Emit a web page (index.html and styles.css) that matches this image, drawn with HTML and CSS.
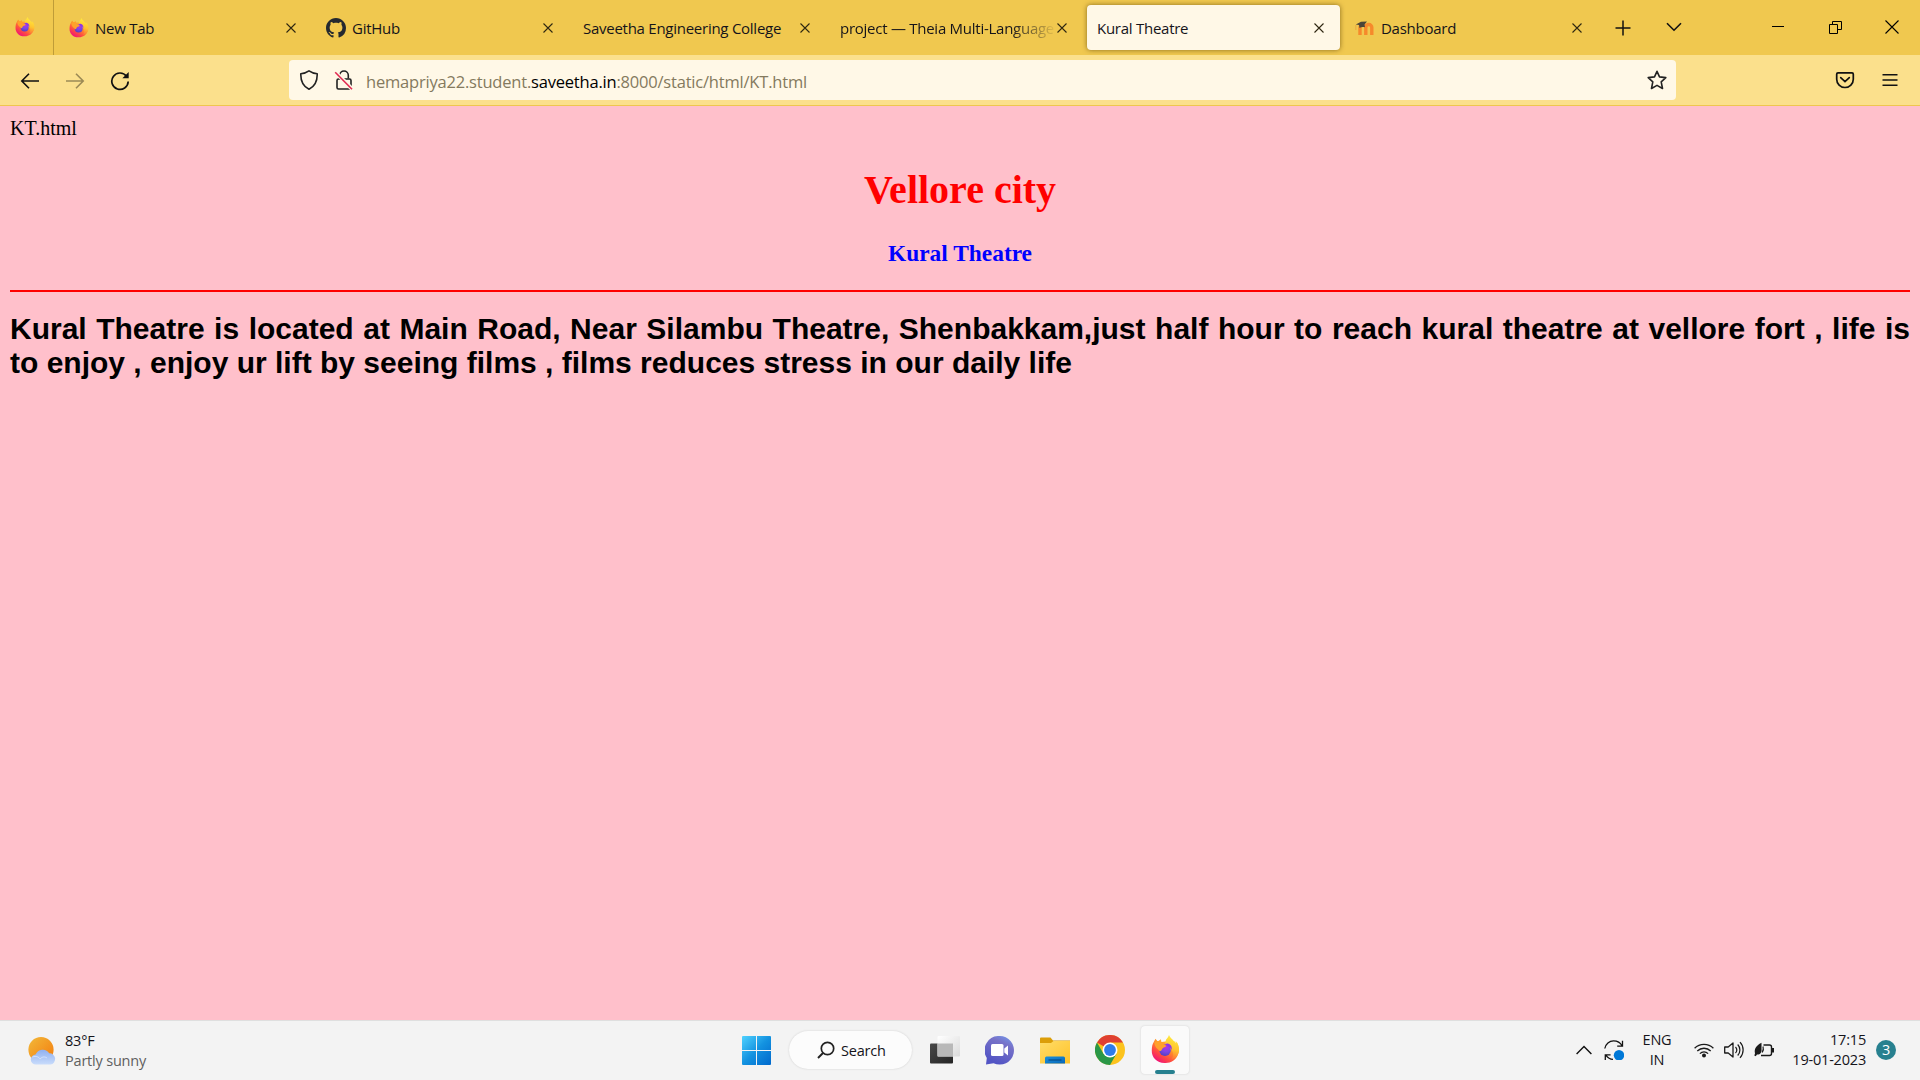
FILE: index.html
```html
<!DOCTYPE html>
<html lang="en">
<head>
<meta charset="utf-8">
<title>Kural Theatre</title>
<link rel="stylesheet" href="styles.css">
</head>
<body>
<svg class="defs" width="0" height="0" aria-hidden="true">
  <defs>
    <linearGradient id="fx-body" x1=".85" y1=".1" x2=".2" y2=".95"><stop offset="0" stop-color="#ffd53a"/><stop offset=".4" stop-color="#ff9028"/><stop offset=".7" stop-color="#ff4a42"/><stop offset="1" stop-color="#f0107a"/></linearGradient>
    <linearGradient id="fx-flame" x1=".6" y1="0" x2=".4" y2="1"><stop offset="0" stop-color="#fff03f"/><stop offset=".55" stop-color="#ffc42f"/><stop offset="1" stop-color="#ff6a36"/></linearGradient>
    <radialGradient id="fx-globe" cx=".6" cy=".2" r=".9"><stop offset="0" stop-color="#b833e1"/><stop offset=".5" stop-color="#7a45e5"/><stop offset="1" stop-color="#4a3fb5"/></radialGradient>
    <symbol id="firefox" viewBox="0 0 30 30">
      <path fill="url(#fx-body)" d="M3 7 4.600 3.800 7 6.600 10.200 4.400 10.800 7.200C13 7 17 6 20 8c1 .5 3 2 4 4l3-4c2 4 2.500 8 1 12-2 6-8 9.500-14 9C6 29 .5 23 .8 16 .9 12 1.500 9 3 7z"/>
      <path fill="url(#fx-flame)" d="M18.600 0c1 3 3.400 3.800 4.900 6.200 1 .3 1.500 1.300 2 2.300.2-.8.200-1.500 0-2.300 2.500 2.500 3.700 6 3.500 9.800-.2 5-4 8.500-8.200 9.500 3-3 2.500-7 .6-10C18 13 14.500 10 15 6.500 15.500 4 18 2.500 18.600 0z"/>
      <circle cx="14.500" cy="15.700" r="6" fill="url(#fx-globe)"/>
      <path fill="#ffa12a" d="M3.500 7.500c3-2.500 6-.8 7.300-.2 1 2 2.400 3 5.200 3.400-.3 2-2.500 2-3.600 2.700-1.400 1-.7 3-3.400 3.400-2-3-5-3-5.500-9.300z"/>
      <path fill="#8d35e8" d="M14.500 10.300c.5-1.600 3-2.200 4.700-.8 1.800 1 2.800 3.500 2.100 6-1.300-3.300-3.600-4-6.800-5.200z"/>
    </symbol>
    <symbol id="close" viewBox="0 0 10 10"><path d="M.5.5l9 9m0-9l-9 9" fill="none" stroke="currentColor" stroke-width="1.100"/></symbol>
  </defs>
</svg>

<header class="tabstrip">
  <div class="pinned"><svg width="20" height="20"><use href="#firefox"/></svg></div>
  <div class="tabs">
    <div class="tab"><svg class="favicon" width="20" height="20"><use href="#firefox"/></svg><span class="tab-title">New Tab</span><svg class="x" width="10" height="10"><use href="#close"/></svg></div>
    <div class="tab"><svg class="favicon" width="20" height="20" viewBox="0 0 16 16"><path fill="#24292f" d="M8 0C3.580 0 0 3.580 0 8c0 3.540 2.290 6.530 5.470 7.590.4.070.55-.17.55-.38 0-.19-.01-.82-.01-1.490-2.010.37-2.530-.49-2.690-.94-.09-.23-.48-.94-.82-1.130-.28-.15-.68-.52-.01-.53.63-.01 1.080.58 1.230.82.72 1.210 1.870.87 2.330.66.070-.52.28-.87.51-1.070-1.780-.2-3.640-.89-3.640-3.950 0-.87.31-1.590.82-2.150-.08-.2-.36-1.020.08-2.120 0 0 .67-.21 2.200.82.64-.18 1.320-.27 2-.27s1.360.09 2 .27c1.530-1.040 2.200-.82 2.200-.82.44 1.100.16 1.920.08 2.120.51.56.82 1.270.82 2.150 0 3.070-1.870 3.750-3.650 3.950.29.25.54.73.54 1.480 0 1.070-.01 1.930-.01 2.200 0 .21.15.46.55.38A8.010 8.010 0 0 0 16 8c0-4.420-3.580-8-8-8z"/></svg><span class="tab-title">GitHub</span><svg class="x" width="10" height="10"><use href="#close"/></svg></div>
    <div class="tab"><span class="tab-title">Saveetha Engineering College</span><svg class="x" width="10" height="10"><use href="#close"/></svg></div>
    <div class="tab"><span class="tab-title fade">project — Theia Multi-Language</span><svg class="x" width="10" height="10"><use href="#close"/></svg></div>
    <div class="tab active"><span class="tab-title">Kural Theatre</span><svg class="x" width="10" height="10"><use href="#close"/></svg></div>
    <div class="tab last"><svg class="favicon" width="20" height="20" viewBox="0 0 20 20"><path d="M5 17V9.500a2.800 2.800 0 0 1 5.800 0V17m0-7.500a2.800 2.800 0 0 1 6 0V17" fill="none" stroke="#f6892b" stroke-width="3.400"/><path d="M.8 7v5" stroke="#e8a23c" stroke-width=".8"/><path d="M.8 6.500 6 3.800l6-.3-2.500 3 .5 2.800c-2-.7-4-.4-5.500.6L4 7z" fill="#4b4538"/></svg><span class="tab-title">Dashboard</span><svg class="x" width="10" height="10"><use href="#close"/></svg></div>
  </div>
  <svg class="plus" width="16" height="16" viewBox="0 0 16 16"><path d="M8 .5v15M.5 8h15" stroke="#111" stroke-width="1.500"/></svg>
  <svg class="alltabs" width="16" height="10" viewBox="0 0 16 10"><path d="M1 1.200l7 7 7-7" fill="none" stroke="#111" stroke-width="1.600"/></svg>
  <div class="winctl">
    <svg width="12" height="12" viewBox="0 0 12 12"><path d="M0 5.500h12" stroke="#000"/></svg>
    <svg width="13" height="13" viewBox="0 0 13 13"><path d="M.5 3.500h8v9h-8zM3.500 3.500v-3h9v8h-4" fill="none" stroke="#000"/></svg>
    <svg width="14" height="14" viewBox="0 0 14 14"><path d="M.5.500l13 13m0-13l-13 13" stroke="#000" stroke-width="1.100"/></svg>
  </div>
</header>

<nav class="toolbar">
  <div class="navbtns">
    <svg width="20" height="20" viewBox="0 0 20 20"><path d="M19 10H2m7-7.300L1.800 10 9 17.300" fill="none" stroke="#111" stroke-width="1.600"/></svg>
    <svg width="20" height="20" viewBox="0 0 20 20"><path d="M1 10h17m-7-7.300 7.200 7.300-7.200 7.300" fill="none" stroke="#9c8a55" stroke-width="1.600"/></svg>
    <svg width="20" height="20" viewBox="0 0 20 20"><path d="M16.500 5.200A8.200 8.200 0 1 0 18.200 10.500" fill="none" stroke="#111" stroke-width="1.700"/><path d="M18.700 1v6.300h-6.300z" fill="#111"/></svg>
  </div>
  <div class="urlbar">
    <svg class="shield" width="20" height="20" viewBox="0 0 20 20"><path d="M10 .9c2.500 1.800 5 2.600 8.200 2.900.2 6.200-1.700 12.200-8.200 15.400C3.500 16 1.600 10 1.800 3.800 5 3.500 7.500 2.700 10 .9z" fill="none" stroke="#222" stroke-width="1.600" stroke-linejoin="round"/></svg>
    <svg class="lock" width="20" height="20" viewBox="0 0 20 20"><rect x="3" y="9" width="14" height="10" rx="1.500" fill="none" stroke="#222" stroke-width="1.600"/><path d="M5.700 8.500V5.300a4.300 4.300 0 0 1 8.600 0v3.200" fill="none" stroke="#222" stroke-width="1.600"/><path d="M1.500 2.200 18 19" stroke="#fff8e7" stroke-width="4"/><path d="M1.200 2.200 18 19.200" stroke="#e22850" stroke-width="1.600"/></svg>
    <span class="url">hemapriya22.student.<b>saveetha.in</b>:8000/static/html/KT.html</span>
    <svg class="star" width="20" height="20" viewBox="0 0 20 20"><path d="M10 1.300l2.500 5.600 6.300.7-4.600 4.200 1.300 6.700-5.500-3.100-5.500 3.100 1.300-6.700L1.200 7.600l6.300-.7z" fill="none" stroke="#222" stroke-width="1.600" stroke-linejoin="round"/></svg>
  </div>
  <div class="toolend">
    <svg width="20" height="20" viewBox="0 0 20 20"><path d="M3 2.900h14q1.300 0 1.300 1.300v5a8.300 8.300 0 0 1-16.600 0v-5q0-1.300 1.300-1.300z" fill="none" stroke="#111" stroke-width="1.700"/><path d="M5.700 7.700 10 11.700l4.300-4" fill="none" stroke="#111" stroke-width="1.700" stroke-linecap="round"/></svg>
    <svg width="16" height="14" viewBox="0 0 16 14"><path d="M.5 1.800h15M.5 7h15M.5 12.200h15" stroke="#111" stroke-width="1.500"/></svg>
  </div>
</nav>

<main class="page">
  <div class="filename">KT.html</div>
  <h1>Vellore city</h1>
  <h3>Kural Theatre</h3>
  <hr>
  <p>Kural Theatre is located at Main Road, Near Silambu Theatre, Shenbakkam,just half hour to reach kural theatre at vellore fort , life is to enjoy , enjoy ur lift by seeing films , films reduces stress in our daily life</p>
</main>

<footer class="taskbar">
  <div class="weather">
    <svg width="28" height="28" viewBox="0 0 28 28"><defs><linearGradient id="sun" x1="0" y1="0" x2="1" y2="1"><stop offset="0" stop-color="#f2b93a"/><stop offset="1" stop-color="#f37a0c"/></linearGradient><linearGradient id="cloud" x1="0" y1="0" x2="0" y2="1"><stop offset="0" stop-color="#8fb0f0"/><stop offset="1" stop-color="#c9dcfb"/></linearGradient></defs><circle cx="13" cy="12.700" r="12.600" fill="url(#sun)"/><path d="M8 27.600a5 5 0 0 1-.4-10 7.600 7.600 0 0 1 13.600-1.300 5.700 5.700 0 0 1 1.300 11.300z" fill="url(#cloud)"/><path d="M4.500 20c3.500-1.500 6.500 0 7.500 2 2-2.500 5-2.500 7-1" fill="none" stroke="#dce8fd" stroke-width=".8"/></svg>
    <div class="wtext"><div class="w-temp">83°F</div><div class="w-desc">Partly sunny</div></div>
  </div>
  <div class="apps">
    <svg class="start" width="29" height="29" viewBox="0 0 29 29"><defs><linearGradient id="win" gradientUnits="userSpaceOnUse" x1="0" y1="0" x2="29" y2="29"><stop offset="0" stop-color="#4fd2ff"/><stop offset=".5" stop-color="#1392e0"/><stop offset="1" stop-color="#0068cc"/></linearGradient></defs><path fill="url(#win)" d="M1 0h13v14H0V1q0-1 1-1zm14 0h13q1 0 1 1v13H15zM0 15h14v14H1q-1 0-1-1zm15 0h14v13q0 1-1 1H15z"/></svg>
    <div class="search"><svg width="18" height="18" viewBox="0 0 18 18"><circle cx="10.500" cy="7.500" r="6.200" fill="none" stroke="#222" stroke-width="1.700"/><path d="M6 12 1 17" stroke="#222" stroke-width="1.900"/></svg><span>Search</span></div>
    <svg class="taskview" width="30" height="28" viewBox="0 0 30 28"><defs><linearGradient id="tv" x1="0" y1="0" x2="1" y2="1"><stop offset="0" stop-color="#484848"/><stop offset="1" stop-color="#242424"/></linearGradient><linearGradient id="tw" x1="0" y1="0" x2="1" y2="1"><stop offset="0" stop-color="#fff"/><stop offset="1" stop-color="#dadada"/></linearGradient></defs><rect y="7.500" width="23" height="20" rx="1" fill="url(#tv)"/><rect x="7.500" width="22.500" height="20.500" rx="1" fill="url(#tw)"/><path d="M7.500 7.500H23v13H7.500z" fill="#b8b8b8"/></svg>
    <svg class="chat" width="29" height="29" viewBox="0 0 29 29"><defs><linearGradient id="ch" x1="1" y1="0" x2=".5" y2="1"><stop offset="0" stop-color="#729df0"/><stop offset=".35" stop-color="#7772c8"/><stop offset="1" stop-color="#5254c4"/></linearGradient></defs><path d="M14.500 0a14.300 14.300 0 1 1-6 27.200L1 28.500 1.800 22A14.300 14.300 0 0 1 14.500 0z" fill="url(#ch)"/><rect x="6" y="8" width="12.500" height="12" rx="1.500" fill="#fff"/><path d="M19.300 12.500l3.700-3v10l-3.700-3z" fill="#fff"/></svg>
    <svg class="files" width="30" height="27" viewBox="0 0 30 27"><defs><linearGradient id="fo" x1="0" y1="0" x2="1" y2="1"><stop offset="0" stop-color="#ffdc68"/><stop offset="1" stop-color="#ffc32a"/></linearGradient><linearGradient id="fb" x1="0" y1="0" x2="1" y2="1"><stop offset="0" stop-color="#1a91dc"/><stop offset="1" stop-color="#0967b8"/></linearGradient></defs><path d="M0 1.500Q0 .5 1 .5h9.500L13 3.500h17V9H0z" fill="#dc9e08"/><path d="M0 6h11l2.500-2H30v22.500H0z" fill="url(#fo)"/><path d="M5 26.500V21q0-1.500 1.500-1.500h17q1.500 0 1.500 1.500v5.500z" fill="url(#fb)"/><path d="M8.500 23h13" stroke="#084c89" stroke-width="1.200"/></svg>
    <svg class="chrome" width="30" height="30" viewBox="0 0 30 30"><circle cx="15" cy="15" r="15" fill="#fcc31d"/><path d="M15 15 2 7.500A15 15 0 0 1 28 7.500H15z" fill="#df4032"/><path d="M2 7.500A15 15 0 0 0 15 30l6.500-11.300L15 15l-6.500 3.700z" fill="#2a9747"/><circle cx="15" cy="15" r="7.500" fill="#fff"/><circle cx="15" cy="15" r="5.900" fill="#2f7ce9"/></svg>
    <div class="running"><svg width="29" height="29"><use href="#firefox"/></svg><i></i></div>
  </div>
  <div class="tray">
    <svg class="up" width="16" height="10" viewBox="0 0 16 10"><path d="M.6 9 8 1.500 15.400 9" fill="none" stroke="#111" stroke-width="1.400"/></svg>
    <svg class="sync" width="20" height="20" viewBox="0 0 20 20"><path d="M.8 8.500C1.500 4 5.500 .8 9.500 .8c3.800 0 7 2 8.500 5M18.500 .8v5.400h-5.300M1.300 20v-5.200h5.300M2 15.300c1.800 2.500 4 3.800 7 4" fill="none" stroke="#111" stroke-width="1.300"/><circle cx="15" cy="15.200" r="5.200" fill="#0078d7"/></svg>
    <div class="lang"><div>ENG</div><div>IN</div></div>
    <svg class="wifi" width="20" height="16" viewBox="0 0 20 16"><g fill="none" stroke="#1a1a1a" stroke-width="1.300"><path d="M.6 6.200a13.300 13.300 0 0 1 18.800 0M3.300 9a9.500 9.500 0 0 1 13.400 0M5.900 11.600a5.800 5.800 0 0 1 8.200 0"/></g><circle cx="10" cy="13.500" r="2" fill="#1a1a1a"/></svg>
    <svg class="sound" width="20" height="18" viewBox="0 0 20 18"><path d="M.7 6h3.500L9 2v14l-4.800-4H.7z" fill="none" stroke="#1a1a1a" stroke-width="1.300" stroke-linejoin="round"/><path d="M11.500 6a4.500 4.500 0 0 1 0 6M13.700 3.500a8 8 0 0 1 0 11M16 1.200a11.300 11.300 0 0 1 0 15.600" fill="none" stroke="#1a1a1a" stroke-width="1.200"/></svg>
    <svg class="battery" width="20" height="16" viewBox="0 0 20 16"><path d="M9.500 3h6q2 0 2 2v6.500q0 2-2 2H7" fill="none" stroke="#1a1a1a" stroke-width="1.400"/><path d="M18 6h2v4.500h-2z" fill="#1a1a1a"/><path d="M7.500.8C2 3.500 0 7 1 11.500L.3 13.500l1.400.7L3 12.500c3 .3 5-2 4.500-5z" fill="#1a1a1a"/><path d="M9 4.500q1 3-.8 6" stroke="#1a1a1a" stroke-width="1.200" fill="none"/></svg>
    <div class="clock"><div class="time">17:15</div><div class="date">19-01-2023</div></div>
    <span class="badge">3</span>
  </div>
</footer>
</body>
</html>
```
FILE: styles.css
```css
* { box-sizing: border-box; }
html, body { margin: 0; height: 100%; overflow: hidden; }
body { display: flex; flex-direction: column; height: 1080px; width: 1920px; font-family: "Open Sans", "Noto Sans", sans-serif; color: #15141a; }
svg { display: block; flex: none; }
.defs { position: absolute; }

.tabstrip { display: flex; flex: none; height: 55px; background: #f0c84f; }
.pinned { width: 54px; border-right: 1px solid #bf9c38; padding: 17px 0 0 15px; }
.tabs { display: flex; gap: 4px; margin: 5px 0 5px 5px; }
.tab { display: flex; width: 253px; height: 45px; padding: 0 16px 0 10px; align-items: center; border-radius: 4px; }
.tab.active { background: #fff8e7; box-shadow: 0 0 5px rgba(80, 55, 0, .65); }
.tab.last { padding: 0 15px 0 11px; }
.favicon { margin-right: 6px; }
.tab-title { flex: 1; min-width: 0; font-size: 15px; letter-spacing: -.26px; line-height: 22px; white-space: nowrap; padding-top: 1px; }
.x { color: #2e2711; }
.fade { -webkit-mask-image: linear-gradient(90deg, #000 170px, transparent 217px); mask-image: linear-gradient(90deg, #000 170px, transparent 217px); }
.plus { margin: 20px 0 0 18px; }
.alltabs { margin: 22px 0 0 35px; }
.winctl { display: flex; align-items: center; gap: 43px; margin-left: 90px; height: 54px; }
.winctl svg:first-child { margin-right: 2px; }

.toolbar { display: flex; flex: none; height: 51px; background: #fbe08c; border-bottom: 1px solid #efc64f; }
.navbtns { display: flex; gap: 25px; padding: 16px 0 0 20px; width: 289px; }
.urlbar { display: flex; width: 1387px; height: 40px; margin-top: 5px; padding: 0 9px 0 10px; background: #fff8e7; border-radius: 4px; align-items: center; }
.lock { margin-left: 15px; }
.url { flex: 1; margin-left: 12px; padding-top: 3px; font-size: 16.500px; letter-spacing: -.2px; line-height: 24px; color: #847a5e; white-space: nowrap; }
.url b { font-weight: 400; color: #000; }
.toolend { display: flex; align-items: center; gap: 27px; margin-left: 159px; height: 49px; }

.page { flex: 1; background: #ffc0cb; padding: 11px 10px 10px; font: 20px/23px "Liberation Serif", serif; color: #000; }
.page h1 { margin: 27px 0 0; font-size: 40px; line-height: 46px; text-align: center; color: #f00; }
.page h3 { margin: 27px 0 0; font-size: 23.400px; line-height: 27px; text-align: center; color: #00f; }
.page hr { height: 2px; margin: 23px 0 0; border: 0; background: #f00; }
.page p { margin: 20px 0 0; font: bold 30px/34px "Liberation Sans", sans-serif; text-align: justify; }

.taskbar { display: flex; flex: none; height: 60px; background: #f3f3f3; border-top: 1px solid #dfdfdf; font-size: 14.500px; letter-spacing: -.2px; }
.weather { display: flex; width: 742px; padding: 16px 0 0 28px; }
.wtext { margin: -6px 0 0 9px; line-height: 20px; }
.w-desc { color: #5f5f5f; }
.apps { display: flex; align-items: center; height: 58px; }
.search { display: flex; width: 123px; height: 38px; margin-left: 18px; padding-left: 28px; align-items: center; background: #fcfcfc; border-radius: 19px; box-shadow: 0 0 2px #ccc; gap: 6px; }
.taskview { margin-left: 18px; }
.chat { margin-left: 25px; }
.files { margin-left: 26px; }
.chrome { margin-left: 25px; }
.running { display: flex; flex-direction: column; align-items: center; width: 48px; height: 48px; margin-left: 16px; padding-top: 9px; background: #fafafa; border-radius: 4px; box-shadow: 0 0 2px #ccc; }
.running i { width: 20px; height: 4px; margin-top: 6px; border-radius: 2px; background: #27808f; }
.tray { display: flex; align-items: center; height: 58px; margin-left: 387px; line-height: 20px; white-space: nowrap; }
.sync { margin-left: 12px; }
.lang { width: 28px; margin: 0 0 0 19px; display: flex; flex-direction: column; align-items: center; }
.wifi { margin-left: 23px; }
.sound { margin-left: 10px; }
.battery { margin-left: 10px; }
.clock { width: 92px; display: flex; flex-direction: column; align-items: flex-end; }
.badge { width: 20px; height: 20px; margin-left: 10px; border-radius: 10px; background: #27808f; color: #fff; text-align: center; }
```
